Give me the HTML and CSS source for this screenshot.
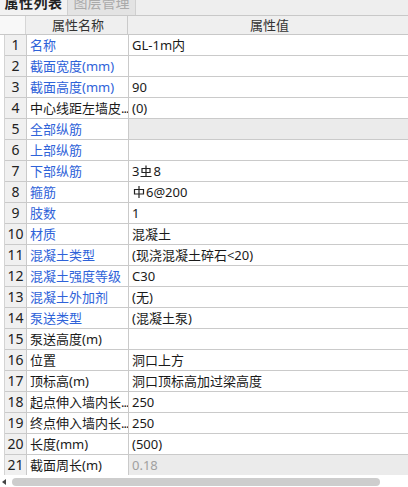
FILE: index.html
```html
<!DOCTYPE html>
<html lang="zh-CN">
<head>
  <meta charset="UTF-8">
  <title>属性列表</title>
  <link rel="stylesheet" href="styles.css">
</head>
<body>
  <div class="tabs">
    <div class="tab active">属性列表</div>
    <div class="tab">图层管理</div>
  </div>

  <div class="grid">
    <div class="row head">
      <div class="num"></div>
      <div class="name">属性名称</div>
      <div class="value">属性值</div>
    </div>
    <div class="rows">
      <div class="row"><div class="num">1</div><div class="name blue">名称</div><div class="value">GL-1m内</div></div>
      <div class="row"><div class="num">2</div><div class="name blue">截面宽度(mm)</div><div class="value"></div></div>
      <div class="row"><div class="num">3</div><div class="name blue">截面高度(mm)</div><div class="value">90</div></div>
      <div class="row"><div class="num">4</div><div class="name">中心线距左墙皮<span class="dots">...</span></div><div class="value">(0)</div></div>
      <div class="row"><div class="num">5</div><div class="name blue">全部纵筋</div><div class="value off"></div></div>
      <div class="row"><div class="num">6</div><div class="name blue">上部纵筋</div><div class="value"></div></div>
      <div class="row"><div class="num">7</div><div class="name blue">下部纵筋</div>
        <div class="value">3<svg class="sym" viewBox="0 0 12 12"><path d="M6 0.5V11M2 3.5H10V7.5H2ZM0.5 11.5H11.5" fill="none" stroke="#222" stroke-width="1.2"/></svg>8</div></div>
      <div class="row"><div class="num">8</div><div class="name blue">箍筋</div>
        <div class="value"><svg class="sym" viewBox="0 0 12 12"><path d="M6 0V12M1.5 3.5H10.5V8H1.5Z" fill="none" stroke="#222" stroke-width="1.2"/></svg>6@200</div></div>
      <div class="row"><div class="num">9</div><div class="name blue">肢数</div><div class="value">1</div></div>
      <div class="row"><div class="num">10</div><div class="name blue">材质</div><div class="value">混凝土</div></div>
      <div class="row"><div class="num">11</div><div class="name blue">混凝土类型</div><div class="value">(现浇混凝土碎石&lt;20)</div></div>
      <div class="row"><div class="num">12</div><div class="name blue">混凝土强度等级</div><div class="value">C30</div></div>
      <div class="row"><div class="num">13</div><div class="name blue">混凝土外加剂</div><div class="value">(无)</div></div>
      <div class="row"><div class="num">14</div><div class="name blue">泵送类型</div><div class="value">(混凝土泵)</div></div>
      <div class="row"><div class="num">15</div><div class="name">泵送高度(m)</div><div class="value"></div></div>
      <div class="row"><div class="num">16</div><div class="name">位置</div><div class="value">洞口上方</div></div>
      <div class="row"><div class="num">17</div><div class="name">顶标高(m)</div><div class="value">洞口顶标高加过梁高度</div></div>
      <div class="row"><div class="num">18</div><div class="name">起点伸入墙内长<span class="dots">...</span></div><div class="value">250</div></div>
      <div class="row"><div class="num">19</div><div class="name">终点伸入墙内长<span class="dots">...</span></div><div class="value">250</div></div>
      <div class="row"><div class="num">20</div><div class="name">长度(mm)</div><div class="value">(500)</div></div>
      <div class="row"><div class="num">21</div><div class="name">截面周长(m)</div><div class="value off grey">0.18</div></div>
    </div>
  </div>

  <div class="hscroll">
    <span class="arrow"></span>
    <span class="thumb"></span>
  </div>
</body>
</html>
```

FILE: styles.css
```css
body {
  margin: 0;
  font-family: "Noto Sans", "Noto Sans CJK SC", sans-serif;
  font-size: 13px;
  color: #1a1a1a;
  background: #fff;
  width: 408px;
  height: 487px;
  overflow: hidden;
}
.tabs {
  display: flex;
  height: 15px;
  overflow: hidden;
  background: #eeeeee;
  border-bottom: 1px solid #c8c8c8;
}
.tab {
  width: 67px;
  height: 24px;
  margin-top: -9px;
  line-height: 24px;
  text-align: center;
  font-size: 14px;
  color: #aaa;
  background: #e3e3e3;
  border-right: 1px solid #d0d0d0;
}
.tab.active {
  color: #222;
  background: #f2f2f2;
  font-weight: bold;
  letter-spacing: 0.5px;
}
.grid {
  margin-left: 4px;
}
.row {
  display: grid;
  grid-template-columns: 22px 102px 1fr;
  height: 20px;
  line-height: 20px;
  border-bottom: 1px solid #cacaca;
  white-space: nowrap;
}
.row > div {
  overflow: hidden;
  border-right: 1px solid #cacaca;
}
.row > div:last-child {
  border-right: none;
}
.head {
  height: 18px;
  line-height: 18px;
  margin-left: -4px;
  grid-template-columns: 26px 102px 1fr;
  border-bottom-color: #c8c8c8;
}
.head .num {
  background: #f8f8f8;
  border-right-color: #d6d6d6;
}
.head .name,
.head .value {
  background: #efefef;
  text-align: center;
  color: #333;
}
.rows {
  height: 440px;
  overflow: hidden;
  border-left: 1px solid #d4d4d4;
}
.num {
  background: #f0f0f0;
  text-align: center;
  color: #222;
  font-size: 14px;
}
.name {
  padding-left: 3px;
}
.dots {
  letter-spacing: -1px;
}
.blue {
  color: #2e62d9;
}
.value {
  padding-left: 3px;
}
.off {
  background: #ebebeb;
}
.grey {
  color: #a0a0a0;
}
.sym {
  width: 12px;
  height: 12px;
  margin: 0 1px;
  vertical-align: -1px;
}
.hscroll {
  position: relative;
  height: 13px;
  background: #fff;
}
.arrow {
  position: absolute;
  left: 2px;
  top: 4px;
  border-right: 4px solid #444;
  border-top: 3px solid transparent;
  border-bottom: 3px solid transparent;
}
.thumb {
  position: absolute;
  left: 12px;
  top: 3px;
  width: 368px;
  height: 8px;
  border-radius: 4px;
  background: #cdcdcd;
}
```
